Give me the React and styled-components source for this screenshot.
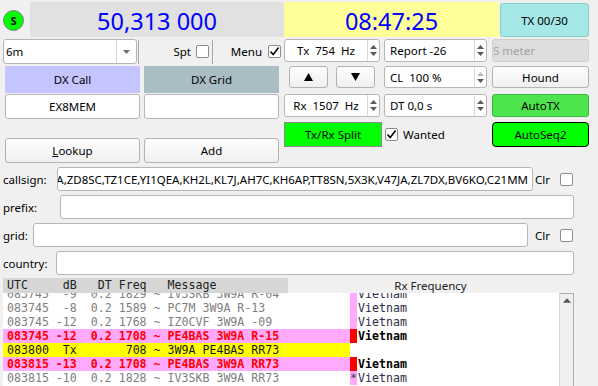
import React, { useLayoutEffect, useRef } from 'react';
import styled, { createGlobalStyle } from 'styled-components';

const GlobalStyle = createGlobalStyle`
  html, body {
    margin: 0;
    padding: 0;
    background: #f0f0f0;
  }
  body {
    font-family: "Noto Sans", "Open Sans", sans-serif;
    font-size: 11.5px;
    color: #000;
    overflow: hidden;
  }
  * {
    box-sizing: border-box;
  }
`;

const Window = styled.div`
  width: 598px;
  height: 386px;
  overflow: hidden;
  padding: 2px 0 0 3px;
`;

// top bar
const TopBar = styled.div`
  display: flex;
  align-items: center;
  height: 35px;
`;

const Led = styled.div`
  width: 21px;
  height: 21px;
  margin: 2px 6px 0 0;
  border-radius: 50%;
  background: #00ff00;
  border: 1px solid #808080;
  display: flex;
  align-items: center;
  justify-content: center;
  font-weight: 700;
  font-size: 11px;
`;

const Display = styled.div`
  width: ${p => p.$w}px;
  height: 35px;
  padding-top: 3px;
  background: ${p => p.$bg};
  color: #0000ff;
  font-size: 23.5px;
  display: flex;
  align-items: center;
  justify-content: center;
`;

const TxCount = styled.div`
  width: 89px;
  height: 34px;
  margin: 1px 0 0 1px;
  background: #a4e8e8;
  border: 1px solid #8ccaca;
  border-radius: 3px;
  display: flex;
  align-items: center;
  justify-content: center;
`;

// control block
const Controls = styled.div`
  display: flex;
  margin-top: 2px;
`;

const Column = styled.div`
  width: ${p => p.$w}px;
  margin-left: ${p => p.$ml || 0}px;
  display: flex;
  flex-direction: column;
`;

const Row = styled.div`
  display: flex;
  align-items: center;
  height: ${p => p.$h}px;
  margin-top: ${p => p.$mt || 0}px;
  padding-left: ${p => p.$pl || 0}px;
  gap: ${p => p.$gap || 0}px;
`;

const Combo = styled.div`
  width: 134px;
  height: 25px;
  display: flex;
  background: #fff;
  border: 1px solid #b5b5b5;
  border-radius: 3px;
`;

const ComboText = styled.div`
  flex: 1;
  padding-left: 2px;
  display: flex;
  align-items: center;
`;

const ComboButton = styled.div`
  width: 20px;
  border-left: 1px solid #d4d4d4;
  display: flex;
  align-items: center;
  justify-content: center;
`;

const VSep = styled.div`
  width: 1px;
  height: 24px;
  margin-left: 1px;
  background: #a8a8a8;
`;

const CheckGroup = styled.label`
  width: ${p => p.$w ? `${p.$w}px` : 'auto'};
  flex: ${p => p.$w ? 'none' : 1};
  display: flex;
  align-items: center;
  justify-content: flex-end;
  gap: ${p => p.$gap}px;
  padding-right: ${p => p.$pr || 0}px;
`;

const Box = styled.span`
  width: 13px;
  height: 13px;
  flex: none;
  background: #fff;
  border: 1px solid #8e8e8e;
  border-radius: 2px;
  display: flex;
  align-items: center;
  justify-content: center;
`;

const Tag = styled.div`
  width: 135px;
  height: 100%;
  background: ${p => p.$bg};
  display: flex;
  align-items: center;
  justify-content: center;
`;

const Field = styled.div`
  width: ${p => p.$w ? `${p.$w}px` : 'auto'};
  flex: ${p => p.$w ? 'none' : 1};
  height: 100%;
  background: #fff;
  border: 1px solid #b6b6b6;
  border-radius: 3px;
  display: flex;
  align-items: center;
  justify-content: ${p => p.$justify || 'center'};
  padding-right: ${p => p.$pr || 0}px;
  overflow: hidden;
  white-space: nowrap;
`;

const FieldText = styled.span`
  flex: none;
`;

const Button = styled.button`
  width: ${p => p.$w ? `${p.$w}px` : '100%'};
  height: 100%;
  margin: 0 0 0 ${p => p.$ml || 0}px;
  padding: 0;
  font: inherit;
  color: #000;
  background: ${p => p.$bg || 'linear-gradient(#fdfdfd, #f0f0f0)'};
  border: 1px solid ${p => p.$border || '#b3b3b3'};
  border-radius: ${p => p.$radius ?? 3}px;
  display: flex;
  align-items: center;
  justify-content: center;
`;

const Meter = styled.div`
  width: 100%;
  height: 100%;
  background: #dedede;
  border: 1px solid #d0d0d0;
  border-radius: 3px;
  color: #a2a2a2;
  display: flex;
  align-items: center;
`;

const SpinFrame = styled.div`
  width: ${p => p.$w}px;
  height: 100%;
  display: flex;
  background: #fff;
  border: 1px solid #b6b6b6;
  border-radius: 3px;
`;

const SpinText = styled.div`
  flex: 1;
  display: flex;
  align-items: center;
  justify-content: ${p => p.$center ? 'center' : 'flex-start'};
  padding-left: ${p => p.$center ? 0 : 5}px;
  white-space: pre;
`;

const SpinArrows = styled.div`
  width: 12px;
  border-left: 1px solid #dadada;
  display: flex;
  flex-direction: column;
  align-items: center;
  justify-content: center;
  gap: 3px;
`;

const Caption = styled.span`
  margin-left: ${p => p.$ml || 0}px;
`;

// form rows
const Form = styled.div`
  width: 571px;
  margin-top: 4px;
  display: flex;
  flex-direction: column;
  gap: 4px;
`;

const FormRow = styled.div`
  display: flex;
  align-items: center;
  height: 24px;
`;

const FormLabel = styled.div`
  width: ${p => p.$w}px;
  flex: none;
`;

const ClrGroup = styled.div`
  width: ${p => p.$w}px;
  flex: none;
  display: flex;
  align-items: center;
  justify-content: flex-end;
  gap: 10px;
  padding-right: 1px;
`;

// decode list
const mono = `
  font-family: "DejaVu Sans Mono", "Liberation Mono", monospace;
  font-size: 11.6px;
`;

const ListHeader = styled.div`
  width: 570px;
  height: 15px;
  margin-top: 3px;
  display: flex;
`;

const HeaderCols = styled.div`
  ${mono}
  width: 285px;
  background: #d6d6d6;
  padding-left: 4px;
  line-height: 15px;
  color: #222;
  white-space: pre;
`;

const HeaderTitle = styled.div`
  flex: 1;
  display: flex;
  align-items: center;
  justify-content: center;
  color: #222;
`;

const List = styled.div`
  width: 571px;
  height: 100px;
  display: flex;
  background: #fff;
  border-right: 1px solid #adadad;
`;

const ListBody = styled.div`
  ${mono}
  flex: 1;
  overflow: hidden;
`;

const Scrollbar = styled.div`
  width: 14px;
  background: #efefef;
  border-top: 1px solid #adadad;
  border-left: 1px solid #d8d8d8;
  display: flex;
  justify-content: center;
  padding-top: 4px;
`;

const DecodeRow = styled.div`
  display: flex;
  height: 14px;
  line-height: 14px;
  white-space: pre;
`;

const rowColors = {
  plain: { bg: 'transparent', fg: '#808080', weight: 400, mark: '#ffaaff' },
  hit: { bg: '#ffaaff', fg: '#ff0000', weight: 700, mark: '#ff0000' },
  tx: { bg: '#ffff00', fg: '#1a1a1a', weight: 400, mark: 'transparent' },
};

const Message = styled.span`
  width: 347px;
  flex: none;
  padding-left: 4px;
  overflow: hidden;
  background: ${p => rowColors[p.$kind].bg};
  color: ${p => rowColors[p.$kind].fg};
  font-weight: ${p => rowColors[p.$kind].weight};
`;

const Marker = styled.span`
  width: 7px;
  flex: none;
  background: ${p => rowColors[p.$kind].mark};
  color: #444;
  text-align: center;
`;

const Country = styled.span`
  padding-left: 1px;
  color: ${p => p.$kind === 'hit' ? '#000' : '#2c2c44'};
  font-weight: ${p => p.$kind === 'hit' ? 700 : 400};
`;

const decodes = [
  { text: '083745  -9  0.2 1829 ~ IV3SKB 3W9A R-04', kind: 'plain', country: 'Vietnam' },
  { text: '083745  -8  0.2 1589 ~ PC7M 3W9A R-13', kind: 'plain', country: 'Vietnam' },
  { text: '083745 -12  0.2 1768 ~ IZ0CVF 3W9A -09', kind: 'plain', country: 'Vietnam' },
  { text: '083745 -12  0.2 1708 ~ PE4BAS 3W9A R-15', kind: 'hit', country: 'Vietnam' },
  { text: '083800  Tx       708 ~ 3W9A PE4BAS RR73', kind: 'tx' },
  { text: '083815 -13  0.2 1708 ~ PE4BAS 3W9A RR73', kind: 'hit', country: 'Vietnam' },
  { text: '083815 -10  0.2 1828 ~ IV3SKB 3W9A RR73', kind: 'plain', mark: '*', country: 'Vietnam' },
];

const Tri = ({ up, color = '#5a5a5a', w = 7, h = 4 }) => (
  <svg width={w} height={h} viewBox="0 0 7 4">
    <path d={up ? 'M0 4 L3.5 0 L7 4 Z' : 'M0 0 L7 0 L3.5 4 Z'} fill={color} />
  </svg>
);

const Check = () => (
  <svg width="11" height="11" viewBox="0 0 11 11">
    <path d="M1.5 5.5 L4.2 8.6 L9.6 1.6" fill="none" stroke="#000" strokeWidth="1.6" />
  </svg>
);

const CheckBox = ({ checked }) => <Box>{checked && <Check />}</Box>;

const Spin = ({ w, center, text, upColor }) => (
  <SpinFrame $w={w}>
    <SpinText $center={center}>{text}</SpinText>
    <SpinArrows>
      <Tri up color={upColor} />
      <Tri />
    </SpinArrows>
  </SpinFrame>
);

const Arrow = ({ up }) => (
  <svg width="9" height="8" viewBox="0 0 9 8">
    <path d={up ? 'M0 8 L4.5 0 L9 8 Z' : 'M0 0 L9 0 L4.5 8 Z'} fill="#000" />
  </svg>
);

export default function App() {
  const listRef = useRef(null);

  useLayoutEffect(() => {
    if (listRef.current) listRef.current.scrollTop = 6;
  }, []);

  return (
    <Window>
      <GlobalStyle />
      <TopBar>
        <Led>S</Led>
        <Display $w={254} $bg="#e1e1e1">50,313 000</Display>
        <Display $w={215} $bg="#ffff99">08:47:25</Display>
        <TxCount>TX 00/30</TxCount>
      </TopBar>

      <Controls>
        <Column $w={279}>
          <Row $h={25}>
            <Combo>
              <ComboText>6m</ComboText>
              <ComboButton><Tri color="#6e6e6e" /></ComboButton>
            </Combo>
            <VSep />
            <CheckGroup $w={72} $gap={5} $pr={2}>
              <span>Spt</span>
              <CheckBox />
            </CheckGroup>
            <VSep />
            <CheckGroup $gap={6} $pr={1}>
              <span>Menu</span>
              <CheckBox checked />
            </CheckGroup>
          </Row>
          <Row $h={27} $mt={2} $pl={2} $gap={4}>
            <Tag $bg="#c4c4ff">DX Call</Tag>
            <Tag $bg="#aabdc5">DX Grid</Tag>
          </Row>
          <Row $h={25} $mt={1} $pl={2} $gap={4}>
            <Field $w={135}>EX8MEM</Field>
            <Field $w={135} />
          </Row>
          <Row $h={25} $mt={19} $pl={2} $gap={4}>
            <Button $w={135}><span><u>L</u>ookup</span></Button>
            <Button $w={135}>Add</Button>
          </Row>
        </Column>

        <Column $w={203} $ml={2}>
          <Row $h={23} $gap={4}>
            <Spin w={96} center text="Tx  754  Hz" />
            <Spin w={103} text="Report -26" />
          </Row>
          <Row $h={22} $mt={4}>
            <Button $w={39} $ml={5}><Arrow up /></Button>
            <Button $w={39} $ml={8}><Arrow /></Button>
            <Caption $ml={9} />
            <Spin w={103} text="CL  100 %" upColor="#b8b8b8" />
          </Row>
          <Row $h={23} $mt={6} $gap={4}>
            <Spin w={96} center text="Rx  1507  Hz" />
            <Spin w={103} text="DT 0,0 s" />
          </Row>
          <Row $h={25} $mt={5}>
            <Button $w={98} $bg="#00ff00" $border="#8a8a8a" $radius={0}>Tx/Rx Split</Button>
            <Caption $ml={3}><CheckBox checked /></Caption>
            <Caption $ml={5}>Wanted</Caption>
          </Row>
        </Column>

        <Column $w={97} $ml={5}>
          <Row $h={23}>
            <Meter>S meter</Meter>
          </Row>
          <Row $h={22} $mt={4}>
            <Button>Hound</Button>
          </Row>
          <Row $h={23} $mt={6}>
            <Button $bg="#4de44d" $border="#3db53d">AutoTX</Button>
          </Row>
          <Row $h={25} $mt={5}>
            <Button $bg="#00ff00" $border="#000" $radius={4}>AutoSeq2</Button>
          </Row>
        </Column>
      </Controls>

      <Form>
        <FormRow>
          <FormLabel $w={54}>callsign:</FormLabel>
          <Field $justify="flex-end" $pr={4}>
            <FieldText>3W9A,VK9XA,ZD8SC,TZ1CE,YI1QEA,KH2L,KL7J,AH7C,KH6AP,TT8SN,5X3K,V47JA,ZL7DX,BV6KO,C21MM</FieldText>
          </Field>
          <ClrGroup $w={41}>
            <span>Clr</span>
            <CheckBox />
          </ClrGroup>
        </FormRow>
        <FormRow>
          <FormLabel $w={57}>prefix:</FormLabel>
          <Field />
        </FormRow>
        <FormRow>
          <FormLabel $w={30}>grid:</FormLabel>
          <Field />
          <ClrGroup $w={46}>
            <span>Clr</span>
            <CheckBox />
          </ClrGroup>
        </FormRow>
        <FormRow>
          <FormLabel $w={53}>country:</FormLabel>
          <Field />
        </FormRow>
      </Form>

      <ListHeader>
        <HeaderCols>{'UTC     dB   DT Freq   Message'}</HeaderCols>
        <HeaderTitle>Rx Frequency</HeaderTitle>
      </ListHeader>
      <List>
        <ListBody ref={listRef}>
          {decodes.map((d, i) => (
            <DecodeRow key={i}>
              <Message $kind={d.kind}>{d.text}</Message>
              <Marker $kind={d.kind}>{d.mark || ''}</Marker>
              {d.country && <Country $kind={d.kind}>{d.country}</Country>}
            </DecodeRow>
          ))}
          <DecodeRow />
        </ListBody>
        <Scrollbar>
          <Tri up color="#555" w={8} h={5} />
        </Scrollbar>
      </List>
    </Window>
  );
}
